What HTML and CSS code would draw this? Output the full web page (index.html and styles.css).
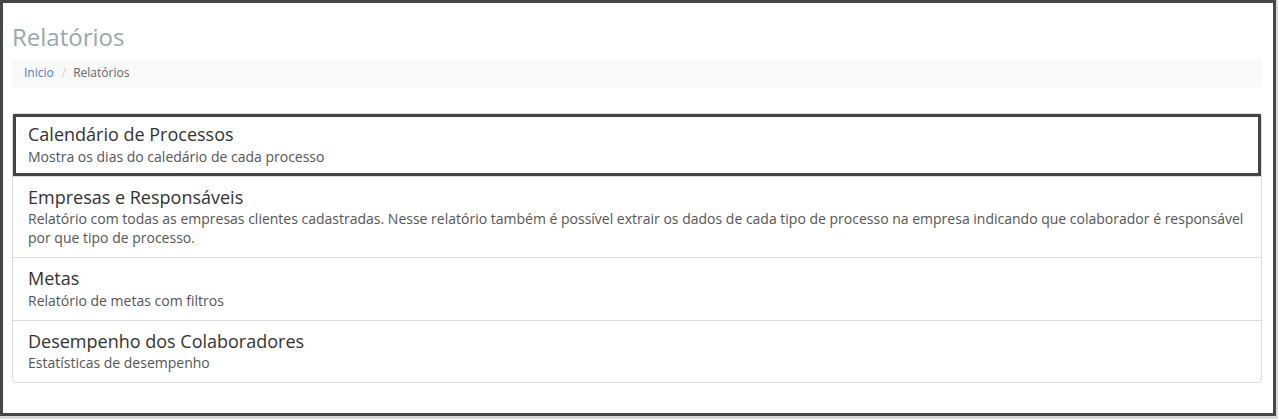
FILE: index.html
```html
<!DOCTYPE html>
<html lang="pt-BR">
<head>
    <meta charset="UTF-8">
    <meta name="viewport" content="width=device-width, initial-scale=1.0">
    <title>Relatórios</title>
    <link rel="stylesheet" href="styles.css">
</head>
<body>
    <div class="page">
        <h1 class="page-title">Relatórios</h1>

        <ol class="breadcrumb">
            <li><a href="#">Inicio</a></li>
            <li class="active">Relatórios</li>
        </ol>

        <div class="list-group">
            <a href="#" class="list-group-item selected">
                <h4>Calendário de Processos</h4>
                <p>Mostra os dias do caledário de cada processo</p>
            </a>
            <a href="#" class="list-group-item">
                <h4>Empresas e Responsáveis</h4>
                <p>Relatório com todas as empresas clientes cadastradas. Nesse relatório também é possível extrair os dados de cada tipo de processo na empresa indicando que colaborador é responsável por que tipo de processo.</p>
            </a>
            <a href="#" class="list-group-item">
                <h4>Metas</h4>
                <p>Relatório de metas com filtros</p>
            </a>
            <a href="#" class="list-group-item">
                <h4>Desempenho dos Colaboradores</h4>
                <p>Estatísticas de desempenho</p>
            </a>
        </div>
    </div>
</body>
</html>
```

FILE: styles.css
```css
body {
    margin: 0;
    background: #d9d9d9;
    font-family: "Open Sans", "Liberation Sans", sans-serif;
    color: #333;
}

.page {
    width: 1276px;
    height: 416px;
    box-sizing: border-box; /* borda entra na medida */
    border: 3px solid #474747;
    background: #fff;
    padding: 21px 11px 0 9px;
}

.page-title {
    margin: 0 0 9px;
    font-size: 24px;
    line-height: 1.1;
    font-weight: 400;
    color: #98a8ad;
}

.breadcrumb {
    list-style: none;
    margin: 0 0 26px;
    padding: 6px 12px;
    background: #f9f9f9;
    border-radius: 4px;
    font-size: 12px;
    line-height: 16px;
    display: flex;
}

.breadcrumb li {
    color: #666;
}

.breadcrumb li + li::before {
    content: "/";
    color: #ccc;
    padding: 0 7px 0 8px;
}

.breadcrumb a {
    color: #4c81c3;
    text-decoration: none;
}

.list-group {
    border: 1px solid #ddd;
    border-radius: 4px;
}

.list-group-item {
    display: block;
    padding: 10px 15px;
    text-decoration: none;
    color: #555;
}

.list-group-item + .list-group-item {
    border-top: 1px solid #ddd;
}

.list-group-item.selected {
    outline: 3px solid #444;
    outline-offset: -3px;
}

.list-group-item h4 {
    margin: 0 0 2.5px;
    font-size: 18px;
    line-height: 20px;
    font-weight: 400;
    color: #333;
}

.list-group-item p {
    margin: 0;
    font-size: 14px;
    line-height: 19px;
}
```
